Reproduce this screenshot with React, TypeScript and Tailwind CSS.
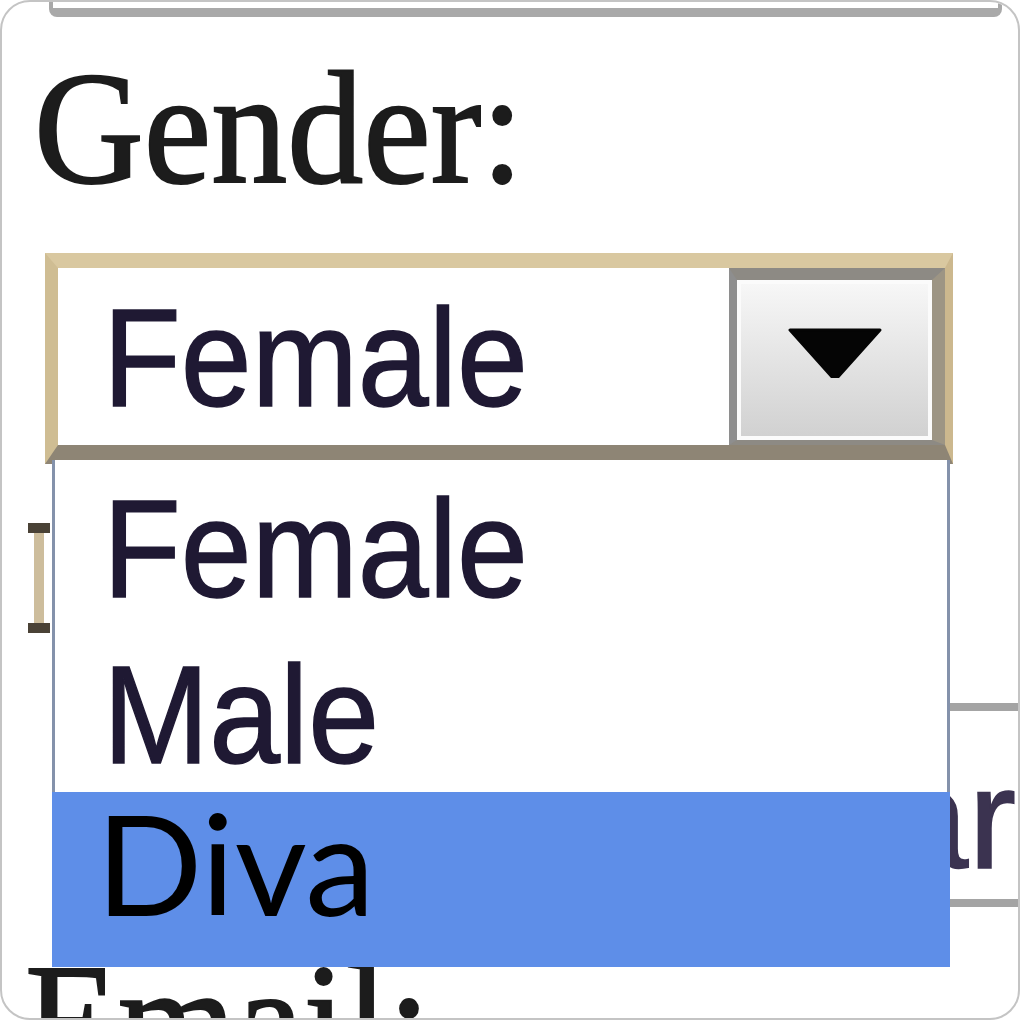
import React from 'react';

const sans = { fontFamily: '"Liberation Sans", Arial, sans-serif' };
const serif = { fontFamily: '"Liberation Serif", "Times New Roman", serif' };

function Option({ label, selected = false }: { label: string; selected?: boolean }) {
  if (selected) {
    return (
      <div className="h-[175px] bg-[#5e8ee8] pl-[44px] -mx-[3px]">
        <span
          className="block text-[140px] leading-none text-black"
          style={{ fontFamily: 'Lato, "Open Sans", sans-serif' }}
        >
          {label}
        </span>
      </div>
    );
  }
  return (
    <div className="h-[166px] pl-[48px] pt-[19px]">
      <span className="inline-block origin-left scale-x-[0.91] text-[140px] leading-none text-[#1f1933] [-webkit-text-stroke:1.5px_#1f1933]" style={sans}>
        {label}
      </span>
    </div>
  );
}

export default function App() {
  const options = ['Female', 'Male', 'Diva'];

  return (
    <div className="h-[1020px] w-[1020px] overflow-hidden rounded-[30px] border-2 border-[#c4c4c4] bg-white">
      {/* bottom of the field above */}
      <div className="ml-[47px] h-[15px] w-[953px] rounded-b-[8px] border-x-[4px] border-b-[9px] border-[#a9a9a9]" />

      <div className="ml-[32px] mt-[31px] h-[160px]">
        <span className="inline-block origin-left scale-x-[0.95] text-[160px] leading-none text-[#1c1c1c] [-webkit-text-stroke:2px_#1c1c1c]" style={serif}>
          Gender:
        </span>
      </div>

      {/* select */}
      <div className="relative z-10 ml-[43px] mt-[45px] h-[211px] w-[908px] border-t-[15px] border-r-[8px] border-b-[19px] border-l-[13px] border-t-[#d9c8a0] border-r-[#ccb88e] border-b-[#8e8575] border-l-[#cfbd93]">
        <div className="flex h-full">
          <div className="flex-1 bg-white pl-[45px] pt-[20px]">
            <span className="inline-block origin-left scale-x-[0.91] text-[140px] leading-none text-[#1f1933] [-webkit-text-stroke:1.5px_#1f1933]" style={sans}>
              Female
            </span>
          </div>
          <div className="h-full w-[216px] border-t-[12px] border-r-[13px] border-b-[5px] border-l-[8px] border-t-[#8d8a84] border-r-[#9d9584] border-b-[#8d8a84] border-l-[#8e8e8e]">
            <div className="flex h-full items-center justify-center bg-gradient-to-b from-[#f8f8f8] to-[#d0d0d0] pb-[14px] shadow-[inset_0_0_0_4px_#fbfbfb]">
              <svg width="94" height="50" viewBox="0 0 94 50">
                <polygon points="2,2 92,2 49,50 45,50" fill="#050505" stroke="#050505" strokeWidth="3" strokeLinejoin="round" />
              </svg>
            </div>
          </div>
        </div>

        {/* open list */}
        <div className="absolute left-[-6px] top-[192px] w-[898px] border-x-[3px] border-[#8492ab] bg-white">
          {options.map((o) => (
            <Option key={o} label={o} selected={o === 'Diva'} />
          ))}
        </div>
      </div>

      {/* form content behind the list */}
      <div className="ml-[26px] mt-[59px] flex w-[22px] flex-col items-center">
        <div className="h-[10px] w-full bg-[#4a4236]" />
        <div className="h-[90px] w-[10px] bg-[#cdbd9c]" />
        <div className="h-[10px] w-full bg-[#4a4236]" />
      </div>

      <div className="mt-[70px] flex">
        <div className="ml-auto h-[204px] w-[420px] border-y-[8px] border-[#a4a4a4] pr-[2px] pt-[36px] text-right">
          <span className="text-[143px] leading-none text-[#3b3350] [-webkit-text-stroke:1.5px_#3b3350]" style={sans}>
            Year
          </span>
        </div>
      </div>

      <div className="ml-[23px] mt-[34px]">
        <span className="inline-block origin-left scale-x-[0.95] text-[160px] leading-none text-[#1c1c1c] [-webkit-text-stroke:2px_#1c1c1c]" style={serif}>
          Email:
        </span>
      </div>
    </div>
  );
}
